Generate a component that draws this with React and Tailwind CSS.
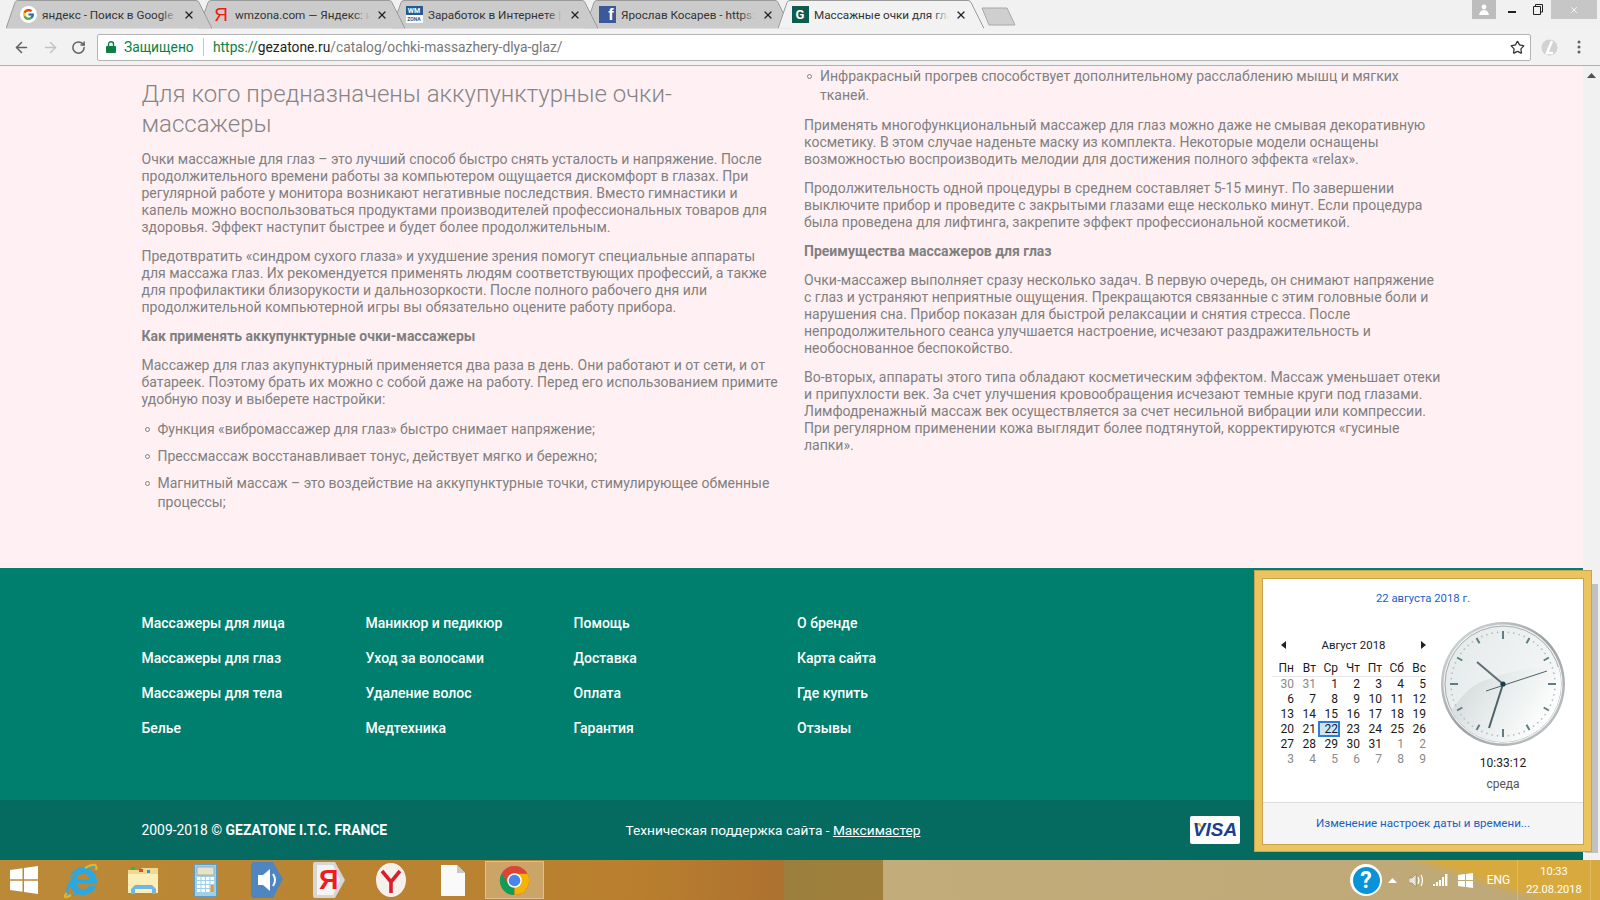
import React from "react";
import { FcGoogle } from "react-icons/fc";
import { FaInternetExplorer } from "react-icons/fa";
import { ArrowLeft, ArrowRight, RotateCw, Star, X } from "lucide-react";

const WEEK = [
  [[30,1],[31,1],[1,0],[2,0],[3,0],[4,0],[5,0]],
  [[6,0],[7,0],[8,0],[9,0],[10,0],[11,0],[12,0]],
  [[13,0],[14,0],[15,0],[16,0],[17,0],[18,0],[19,0]],
  [[20,0],[21,0],[22,2],[23,0],[24,0],[25,0],[26,0]],
  [[27,0],[28,0],[29,0],[30,0],[31,0],[1,1],[2,1]],
  [[3,1],[4,1],[5,1],[6,1],[7,1],[8,1],[9,1]],
];

function TabShape({ active }) {
  return (
    <svg className="absolute inset-0" width="206" height="29" viewBox="0 0 206 29">
      <path d="M0 28.5 L9 2.5 Q9.8 .5 12 .5 H190 Q192.2 .5 193 2.5 L206 28.5 Z"
        fill={active ? "#f2f2f2" : "#cbcbcb"} />
      <path d="M0 28.5 L9 2.5 Q9.8 .5 12 .5 H190 Q192.2 .5 193 2.5 L206 28.5"
        fill="none" stroke="#9a9a9a" strokeWidth="1" />
    </svg>
  );
}

function Tab({ icon, title, active, z }) {
  return (
    <div className={"relative w-[206px] h-[29px] -mr-[13px] shrink-0 " + z}>
      <TabShape active={active} />
      <div className="relative flex items-center h-[29px] pl-[13px]">
        <div className="w-[18px] h-[18px] flex items-center justify-center shrink-0">{icon}</div>
        <div className="relative ml-[5px] w-[135px] overflow-hidden whitespace-nowrap text-[11.7px] leading-[16px] text-[#333] font-['Roboto',sans-serif]">
          {title}
          <div className={active
            ? "absolute right-0 top-0 bottom-0 w-[16px] bg-gradient-to-r from-transparent to-[#f2f2f2]"
            : "absolute right-0 top-0 bottom-0 w-[16px] bg-gradient-to-r from-transparent to-[#cbcbcb]"} />
        </div>
        <X size={12} strokeWidth={2.6} className="ml-[6px] text-[#222] shrink-0" />
      </div>
    </div>
  );
}

function Chrome({ size = 32 }) {
  return (
    <svg width={size} height={size} viewBox="0 0 32 32">
      <circle cx="16" cy="16" r="15" fill="#db4437" />
      <path d="M16 16 L3 8.5 A15 15 0 0 0 16 31 Z" fill="#0f9d58" />
      <path d="M16 16 L16 31 A15 15 0 0 0 29 8.5 L16 8.5 Z" fill="#f4b400" />
      <path d="M16 9 H29 A15 15 0 0 0 3 8.5 L9.5 19.5 A7 7 0 0 1 16 9 Z" fill="#db4437" />
      <circle cx="16" cy="16" r="7.5" fill="#fff" />
      <circle cx="16" cy="16" r="6" fill="#4a86e8" />
    </svg>
  );
}

function Clock() {
  const ticks = [];
  for (let i = 0; i < 60; i++) {
    const a = (i * Math.PI) / 30;
    const s = Math.sin(a), c = -Math.cos(a);
    if (i % 5 === 0) {
      const l = i % 15 === 0 ? 45 : 47;
      ticks.push(<line key={i} x1={64 + s * l} y1={64 + c * l} x2={64 + s * 53} y2={64 + c * 53} stroke="#5f7d82" strokeWidth="2" />);
    } else {
      ticks.push(<circle key={i} cx={64 + s * 52} cy={64 + c * 52} r="0.9" fill="#b4bfc2" />);
    }
  }
  return (
    <svg width="128" height="128" viewBox="0 0 128 128">
      <defs>
        <linearGradient id="rim" x1="0" y1="0" x2="1" y2="1">
          <stop offset="0" stopColor="#dfe3e5" />
          <stop offset="0.5" stopColor="#9a9fa1" />
          <stop offset="1" stopColor="#c6cacc" />
        </linearGradient>
        <linearGradient id="face" x1="0" y1="0" x2="1" y2="0.6">
          <stop offset="0" stopColor="#e2e8e8" />
          <stop offset="1" stopColor="#f7f8f8" />
        </linearGradient>
        <linearGradient id="swoosh" x1="0" y1="0" x2="1" y2="0.4">
          <stop offset="0" stopColor="#c8d1d1" />
          <stop offset="0.55" stopColor="#e8ecec" />
          <stop offset="1" stopColor="#ffffff" />
        </linearGradient>
        <clipPath id="faceclip"><circle cx="64" cy="64" r="58" /></clipPath>
      </defs>
      <circle cx="64" cy="64" r="62" fill="url(#rim)" />
      <circle cx="64" cy="64" r="59.5" fill="#f2f4f4" />
      <circle cx="64" cy="64" r="58" fill="url(#face)" stroke="#a6abad" strokeWidth="1" />
      <path clipPath="url(#faceclip)" d="M9 97 C20 78 30 66 47 60 C70 51 95 47 124 47 V128 H0 V97 Z" fill="url(#swoosh)" />
      {ticks}
      <line x1="64" y1="64" x2="38" y2="42" stroke="#5d6f73" strokeWidth="2" />
      <line x1="64" y1="64" x2="50" y2="108" stroke="#4d6368" strokeWidth="2" />
      <line x1="47" y1="71" x2="108" y2="51" stroke="#4d6368" strokeWidth="1" />
      <circle cx="64" cy="64" r="2.6" fill="#17404a" />
    </svg>
  );
}

function Popup() {
  return (
    <div className="absolute left-[1254px] top-[570px] w-[338px] h-[282px] bg-[#ecc45f] border border-[#c8a44e] p-[7px] font-['Roboto',sans-serif] text-[12px] text-[#1a1a1a]">
      <div className="w-[322px] h-[267px] bg-white border border-[#c8a44e] flex flex-col">
        <div className="h-[223px] relative">
          <div className="text-center text-[#1a5fc4] pt-[12px] leading-[16px] text-[11.3px]">22 августа 2018 г.</div>
          <div className="flex pl-[9px] pt-[30px]">
            <div className="w-[154px]">
              <div className="flex items-center justify-between h-[16px] pl-[9px] leading-[16px] text-[11.4px]">
                <svg width="6" height="8" viewBox="0 0 6 8"><path d="M5 0V8L0 4Z" fill="#222" /></svg>
                <span>Август 2018</span>
                <svg width="6" height="8" viewBox="0 0 6 8"><path d="M1 0V8L6 4Z" fill="#222" /></svg>
              </div>
              <div className="grid grid-cols-7 mt-[8px] h-[16px] border-b border-[#e6e6e6] w-[154px] leading-[15px] text-right">
                {["Пн","Вт","Ср","Чт","Пт","Сб","Вс"].map((d) => <div key={d}>{d}</div>)}
              </div>
              {WEEK.map((row, i) => (
                <div key={i} className="grid grid-cols-7 h-[15px] leading-[15px] text-right w-[154px]">
                  {row.map(([n, k], j) => (
                    <div key={j} className={k === 1 ? "text-[#8a8a8a]" : k === 2 ? "relative text-[#1a1a1a]" : ""}>
                      {k === 2 && <div className="absolute left-[2px] top-[-1px] w-[22px] h-[16px] bg-[#cde6f7] border-2 border-[#2a7fd4]" />}
                      <span className="relative">{n}</span>
                    </div>
                  ))}
                </div>
              ))}
            </div>
            <div className="w-[128px] ml-[13px] -mt-[17px] flex flex-col items-center">
              <Clock />
              <div className="leading-[16px] mt-[7px]">10:33:12</div>
              <div className="leading-[16px] mt-[5px] text-[#555]">среда</div>
            </div>
          </div>
        </div>
        <div className="flex-1 bg-[#f5f5f5] border-t border-[#dcdcdc] flex items-center justify-center text-[#1a5fc4] text-[11.6px]">
          Изменение настроек даты и времени...
        </div>
      </div>
    </div>
  );
}

const P = "mb-[12px] text-[14px] leading-[17px]";
const LI = "relative pl-[16px] mb-[8px] text-[14px] leading-[19px]";
const Dot = () => <span className="absolute left-[3px] top-[7px] w-[5px] h-[5px] rounded-full border border-[#808080]" />;

function Taskbar() {
  return (
    <div className="h-[40px] flex items-center shrink-0 bg-[linear-gradient(18deg,transparent_88.5%,#d8aa3e_90.5%),linear-gradient(90deg,#bb8a38_0%,#b97f2e_40%,#ad7130_49%,#9c7f3c_49%,#a07f3c_55.2%,#c2ac7a_55.2%,#bfa877_100%)]">
      <div className="w-[47px] mr-[3px] flex justify-center items-center">
        <svg width="28" height="28" viewBox="0 0 28 28"><path d="M0 4 L12.5 2.2V13.2H0Z M14 2 L28 0V13.2H14Z M0 14.8H12.5V25.8L0 24Z M14 14.8H28V28L14 26Z" fill="#fff" /></svg>
      </div>
      <div className="w-[62px] flex justify-center relative">
        <FaInternetExplorer size={31} className="text-[#2aa8df]" />
        <svg width="36" height="36" viewBox="0 0 36 36" className="absolute left-[13px] top-[-2px]">
          <path d="M4 30 C0 34 2 36 8 32 M22 5 C30 0 35 1 33 7" fill="none" stroke="#e8b520" strokeWidth="2.2" />
        </svg>
      </div>
      <div className="w-[62px] flex justify-center">
        <svg width="32" height="30" viewBox="0 0 32 30">
          <path d="M1 5H13L15 3H31V28H1Z" fill="#eed98f" />
          <rect x="4" y="2" width="4" height="3" fill="#36b24a" /><rect x="12" y="4" width="4" height="3" fill="#d84a3a" /><rect x="20" y="5" width="3" height="3" fill="#3a8ed8" />
          <path d="M1 9H31V28H1Z" fill="#fbeeb8" />
          <path d="M4 29V24L8 20H25L29 24V29H25V24H8V29Z" fill="#6fb6e0" />
        </svg>
      </div>
      <div className="w-[62px] flex justify-center">
        <svg width="23" height="33" viewBox="0 0 23 33">
          <rect x="0.5" y="0.5" width="22" height="32" rx="1" fill="#9fd0ea" stroke="#5b9cc8" />
          <rect x="3" y="3" width="17" height="8" fill="#e8e2c8" stroke="#7f7f70" strokeWidth=".5" />
          <g fill="#fff">
            {[13,17,21,25].map((y) => [3,7.5,12,16.5].map((x) => <rect key={x + "-" + y} x={x} y={y} width="3.4" height="3" />))}
          </g>
          <rect x="16.5" y="21" width="3.4" height="7" fill="#e89a2c" />
        </svg>
      </div>
      <div className="w-[62px] flex justify-center">
        <svg width="32" height="36" viewBox="0 0 32 36">
          <path d="M3 0H22L32 17L22 36H3Q0 36 0 33V3Q0 0 3 0Z" fill="#4f86c0" />
          <path d="M7 13H12L19 7V29L12 23H7Z" fill="#fff" />
          <path d="M22 12Q26 18 22 24" stroke="#fff" strokeWidth="2" fill="none" />
        </svg>
      </div>
      <div className="w-[62px] flex justify-center">
        <div className="relative w-[32px] h-[36px]">
          <svg width="32" height="36" viewBox="0 0 32 36" className="absolute inset-0">
            <path d="M2 0H22L32 18L22 36H2Q0 36 0 34V2Q0 0 2 0Z" fill="#d6d6d6" />
            <path d="M4 3H20L27 18L20 33H4Z" fill="#f4f4f4" />
          </svg>
          <span className="absolute left-[6px] top-[2px] text-[27px] leading-[32px] font-bold text-[#ee1c1c] font-['Liberation_Sans',sans-serif]">Я</span>
        </div>
      </div>
      <div className="w-[62px] flex justify-center">
        <svg width="30" height="34" viewBox="0 0 30 34">
          <ellipse cx="15" cy="17" rx="15" ry="17" fill="#f5f0ec" />
          <path d="M6 8L15 19L24 8M15 19V30" stroke="#d81e2c" strokeWidth="3.6" fill="none" />
        </svg>
      </div>
      <div className="w-[62px] flex justify-center">
        <svg width="24" height="31" viewBox="0 0 24 31">
          <path d="M0 0H16L24 8V31H0Z" fill="#fafafa" />
          <path d="M16 0L24 8H16Z" fill="#c8c8c8" />
        </svg>
      </div>
      <div className="w-[59px] h-[38px] ml-[1px] flex items-center justify-center bg-[#cba468] border border-[#dcc190]">
        <Chrome size={31} />
      </div>
      <div className="ml-auto flex items-center h-full text-white font-['Roboto',sans-serif]">
        <div className="w-[32px] h-[32px] rounded-full bg-white flex items-center justify-center">
          <div className="w-[27px] h-[27px] rounded-full bg-[#0a93d6] flex items-center justify-center text-[23px] font-bold leading-none">?</div>
        </div>
        <div className="w-[20px] flex justify-center"><svg width="9" height="5" viewBox="0 0 9 5"><path d="M0 5L4.5 0L9 5Z" fill="#fff" /></svg></div>
        <div className="w-[30px] flex justify-center">
          <svg width="17" height="15" viewBox="0 0 17 15">
            <path d="M0 5H3L7 1V14L3 10H0Z" fill="#e9e4da" stroke="#776" strokeWidth=".5" />
            <path d="M9 4Q11 7.5 9 11M12 2Q15 7.5 12 13" stroke="#fff" strokeWidth="1.2" fill="none" />
          </svg>
        </div>
        <div className="w-[18px] flex justify-center">
          <svg width="16" height="13" viewBox="0 0 16 13"><g fill="#fff"><rect x="0" y="10" width="2" height="2" /><rect x="3" y="8" width="2" height="4" /><rect x="6" y="6" width="2" height="6" /><rect x="9" y="3" width="2" height="9" /><rect x="12" y="0" width="2.4" height="12" /></g></svg>
        </div>
        <div className="w-[30px] flex justify-center">
          <svg width="15" height="15" viewBox="0 0 15 15"><path d="M0 2L7 1V7H0Z M8 1L15 0V7H8Z M0 8H7V14L0 13Z M8 8H15V15L8 14Z" fill="#fff" /></svg>
        </div>
        <div className="w-[37px] text-center text-[12px]">ENG</div>
        <div className="w-px h-full bg-[#ffffff30]" />
        <div className="w-[72px] text-center text-[11px] leading-[18px] pt-[1px]">
          <div>10:33</div>
          <div>22.08.2018</div>
        </div>
        <div className="w-px h-full bg-[#ffffff30]" />
        <div className="w-[9px]" />
      </div>
    </div>
  );
}

export default function App() {
  const foot = [
    ["Массажеры для лица", "Массажеры для глаз", "Массажеры для тела", "Белье"],
    ["Маникюр и педикюр", "Уход за волосами", "Удаление волос", "Медтехника"],
    ["Помощь", "Доставка", "Оплата", "Гарантия"],
    ["О бренде", "Карта сайта", "Где купить", "Отзывы"],
  ];
  return (
    <div className="relative w-[1600px] h-[900px] overflow-hidden flex flex-col bg-white font-['Roboto',sans-serif]">
      {/* tab strip */}
      <div className="h-[28px] bg-[#f1f1f1] flex items-start pl-[6px] shrink-0 relative z-10">
        <Tab z="z-40" title="яндекс - Поиск в Google" icon={<span className="w-[17px] h-[17px] rounded-full bg-white flex items-center justify-center"><FcGoogle size={13} /></span>} />
        <Tab z="z-30" title="wmzona.com — Яндекс: нашлось" icon={<span className="text-[#f01c10] text-[19px] leading-none font-['Liberation_Sans',sans-serif]">Я</span>} />
        <Tab z="z-20" title="Заработок в Интернете | WMZona" icon={
          <span className="w-[17px] h-[17px] bg-[#2a5a8c] text-white flex flex-col items-center justify-center text-[7px] font-bold leading-[8px]"><span>WM</span><span className="text-[5px] bg-white text-[#2a5a8c] w-full text-center">ZONA</span></span>} />
        <Tab z="z-10" title="Ярослав Косарев - https://www" icon={<span className="w-[17px] h-[17px] bg-[#3b5998] text-white flex items-end justify-end pr-[2px] text-[16px] font-bold leading-[16px] font-['Liberation_Sans',sans-serif]">f</span>} />
        <Tab z="z-50" active title="Массажные очки для глаз" icon={<span className="w-[17px] h-[17px] bg-[#0d5c4d] text-white flex items-center justify-center text-[13px] font-bold leading-none">G</span>} />
        <svg width="36" height="19" viewBox="0 0 36 19" className="ml-[10px] mt-[7px] shrink-0">
          <path d="M1 1H26L34 18H8Z" fill="#cfcfcf" stroke="#a8a8a8" />
        </svg>
        <div className="ml-auto flex items-start h-[19px] pr-[3px]">
          <div className="w-[24px] h-[19px] bg-[#bdbdbd] flex items-center justify-center">
            <svg width="10" height="11" viewBox="0 0 10 11"><circle cx="5" cy="3" r="2.4" fill="#fff" /><path d="M0 11Q1 6 5 6T10 11Z" fill="#fff" /></svg>
          </div>
          <div className="w-[32px] h-[19px] flex items-center justify-center"><div className="w-[8px] h-[2px] bg-[#222] mt-[4px]" /></div>
          <div className="w-[19px] mr-[4px] h-[19px] flex items-center justify-center">
            <svg width="10" height="11" viewBox="0 0 10 11"><path d="M2.5 2.5V.5H9.5V8H7.5M.5 2.5H7.5V10.5H.5Z" fill="none" stroke="#222" /></svg>
          </div>
          <div className="w-[46px] h-[19px] bg-[#c6c6c6] flex items-center justify-center"><X size={10} strokeWidth={2} className="text-white" /></div>
        </div>
      </div>

      {/* toolbar */}
      <div className="h-[38px] bg-[#f2f2f2] border-b border-[#b0b0b0] flex items-center shrink-0 pt-[1px]">
        <ArrowLeft size={17} strokeWidth={2.2} className="ml-[13px] text-[#5f6368]" />
        <ArrowRight size={17} strokeWidth={2.2} className="ml-[12px] text-[#c4c4c4]" />
        <RotateCw size={15} strokeWidth={2.4} className="ml-[12px] text-[#5f6368]" />
        <div className="ml-[11px] w-[1434px] h-[27px] bg-white border border-[#b4b4b4] rounded-[2px] flex items-center text-[13.8px] shrink-0">
          <svg width="10" height="12" viewBox="0 0 10 12" className="ml-[8px]"><rect x="0" y="5" width="10" height="7" rx="1" fill="#0b8043" /><path d="M2.5 5V3.2a2.5 2.5 0 0 1 5 0V5" fill="none" stroke="#0b8043" strokeWidth="1.4" /></svg>
          <span className="ml-[8px] text-[#0b8043] w-[72px]">Защищено</span>
          <div className="w-px h-[18px] bg-[#c4c4c4] ml-[7px]" />
          <span className="ml-[9px] text-[#0b8043]">https://</span>
          <span className="text-[#222]">gezatone.ru</span>
          <span className="text-[#777]">/catalog/ochki-massazhery-dlya-glaz/</span>
          <Star size={15} strokeWidth={2} className="ml-auto mr-[5px] text-[#333]" />
        </div>
        <svg width="17" height="17" viewBox="0 0 17 17" className="ml-[10px]"><circle cx="8.5" cy="8.5" r="8" fill="#d2d2d2" /><path d="M11 2L6 14H12" stroke="#fff" strokeWidth="2.5" fill="none" /></svg>
        <svg width="4" height="14" viewBox="0 0 4 14" className="ml-[19px]"><g fill="#5f6368"><circle cx="2" cy="2" r="1.5" /><circle cx="2" cy="7" r="1.5" /><circle cx="2" cy="12" r="1.5" /></g></svg>
      </div>

      {/* page */}
      <div className="flex flex-1 min-h-0">
        <div className="w-[1583px] flex flex-col">
          <div className="h-[502px] bg-[#fff0f3] text-[#808080] flex pl-[141.5px] shrink-0 whitespace-nowrap">
            <div className="w-[662.5px] pt-[13px]">
              <h2 className="text-[24px] leading-[30px] font-light text-[#858585] mb-[12px]">Для кого предназначены аккупунктурные очки-<br />массажеры</h2>
              <p className={P}>Очки массажные для глаз – это лучший способ быстро снять усталость и напряжение. После<br />продолжительного времени работы за компьютером ощущается дискомфорт в глазах. При<br />регулярной работе у монитора возникают негативные последствия. Вместо гимнастики и<br />капель можно воспользоваться продуктами производителей профессиональных товаров для<br />здоровья. Эффект наступит быстрее и будет более продолжительным.</p>
              <p className={P}>Предотвратить «синдром сухого глаза» и ухудшение зрения помогут специальные аппараты<br />для массажа глаз. Их рекомендуется применять людям соответствующих профессий, а также<br />для профилактики близорукости и дальнозоркости. После полного рабочего дня или<br />продолжительной компьютерной игры вы обязательно оцените работу прибора.</p>
              <p className={P + " font-bold"}>Как применять аккупунктурные очки-массажеры</p>
              <p className={P}>Массажер для глаз акупунктурный применяется два раза в день. Они работают и от сети, и от<br />батареек. Поэтому брать их можно с собой даже на работу. Перед его использованием примите<br />удобную позу и выберете настройки:</p>
              <ul>
                <li className={LI}><Dot />Функция «вибромассажер для глаз» быстро снимает напряжение;</li>
                <li className={LI}><Dot />Прессмассаж восстанавливает тонус, действует мягко и бережно;</li>
                <li className={LI}><Dot />Магнитный массаж – это воздействие на аккупунктурные точки, стимулирующее обменные<br />процессы;</li>
              </ul>
            </div>
            <div className="flex-1 pt-px">
              <ul>
                <li className={LI + " !mb-[12px]"}><Dot />Инфракрасный прогрев способствует дополнительному расслаблению мышц и мягких<br />тканей.</li>
              </ul>
              <p className={P}>Применять многофункциональный массажер для глаз можно даже не смывая декоративную<br />косметику. В этом случае наденьте маску из комплекта. Некоторые модели оснащены<br />возможностью воспроизводить мелодии для достижения полного эффекта «relax».</p>
              <p className={P}>Продолжительность одной процедуры в среднем составляет 5-15 минут. По завершении<br />выключите прибор и проведите с закрытыми глазами еще несколько минут. Если процедура<br />была проведена для лифтинга, закрепите эффект профессиональной косметикой.</p>
              <p className={P + " font-bold"}>Преимущества массажеров для глаз</p>
              <p className={P}>Очки-массажер выполняет сразу несколько задач. В первую очередь, он снимают напряжение<br />с глаз и устраняют неприятные ощущения. Прекращаются связанные с этим головные боли и<br />нарушения сна. Прибор показан для быстрой релаксации и снятия стресса. После<br />непродолжительного сеанса улучшается настроение, исчезают раздражительность и<br />необоснованное беспокойство.</p>
              <p className={P}>Во-вторых, аппараты этого типа обладают косметическим эффектом. Массаж уменьшает отеки<br />и припухлости век. За счет улучшения кровообращения исчезают темные круги под глазами.<br />Лимфодренажный массаж век осуществляется за счет несильной вибрации или компрессии.<br />При регулярном применении кожа выглядит более подтянутой, корректируются «гусиные<br />лапки».</p>
            </div>
          </div>
          <div className="h-[232px] bg-[#007f6e] pl-[141.5px] pt-[38px] grid grid-cols-[224px_208px_223.5px_auto] content-start shrink-0">
            {foot.map((col, i) => (
              <div key={i} className="flex flex-col">
                {col.map((t) => <span key={t} className="h-[35px] leading-[35px] text-[14px] font-medium text-white">{t}</span>)}
              </div>
            ))}
          </div>
          <div className="h-[60px] bg-[#056b61] pl-[141.5px] flex items-center text-white shrink-0">
            <div className="w-[484px] text-[13.9px]">2009-2018 © <b className="font-bold">GEZATONE I.T.C. FRANCE</b></div>
            <div className="w-[564.5px] text-[13.7px]">Техническая поддержка сайта - <span className="underline">Максимастер</span></div>
            <div className="relative w-[50px] h-[28px] rounded-[2px] bg-white flex items-center justify-center italic font-bold text-[#1a3f8f] text-[19px] font-['Liberation_Sans',sans-serif]">
              <svg width="9" height="6" viewBox="0 0 9 6" className="absolute left-[4px] top-[7px]"><path d="M0 0H6L9 6Q5 2 0 0Z" fill="#f2a81d" /></svg>
              <span className="relative">VISA</span>
            </div>
          </div>
        </div>
        <div className="w-[17px] bg-[#f1f1f1] flex flex-col items-center pt-[7px]">
          <svg width="9" height="5" viewBox="0 0 9 5"><path d="M0 5L4.5 0L9 5Z" fill="#505050" /></svg>
          <div className="mt-[506px] w-[13px] h-[269px] bg-[#c1c1c1]" />
        </div>
      </div>

      <Taskbar />
      <Popup />
    </div>
  );
}
